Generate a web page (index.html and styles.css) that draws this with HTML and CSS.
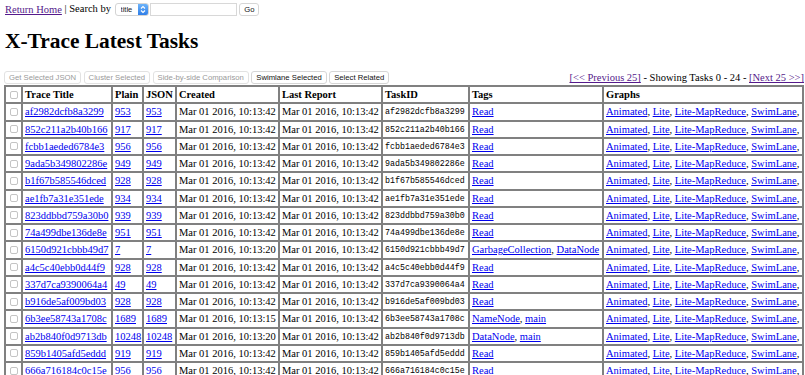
FILE: index.html
```html
<!DOCTYPE html>
<html lang="en">
<head>
    <meta charset="UTF-8">
    <title>X-Trace Latest Tasks</title>
    <link rel="stylesheet" href="styles.css">
</head>
<body>
    <div class="topbar">
        <a href="#" class="visited">Return Home</a> | Search by
        <span class="select">
            <select><option>title</option></select>
            <span class="stepper">
                <svg width="6" height="9" viewBox="0 0 6 9"><path d="M1 3.5 L3 1.5 L5 3.5 M1 5.5 L3 7.5 L5 5.5" fill="none" stroke="#fff" stroke-width="1.1"/></svg>
            </span>
        </span><input type="text" class="search"> <button class="small-btn">Go</button>
    </div>

    <h1>X-Trace Latest Tasks</h1>

    <div class="toolbar">
        <div class="actions">
            <button class="small-btn" disabled>Get Selected JSON</button>
            <button class="small-btn" disabled>Cluster Selected</button>
            <button class="small-btn" disabled>Side-by-side Comparison</button>
            <button class="small-btn">Swimlane Selected</button>
            <button class="small-btn">Select Related</button>
        </div>
        <div class="pager">
            <a href="#" class="visited">[&lt;&lt; Previous 25]</a> - Showing Tasks 0 - 24 - <a href="#" class="visited">[Next 25 &gt;&gt;]</a>
        </div>
    </div>

    <table class="tasks">
        <colgroup>
            <col class="c-check"><col class="c-title"><col class="c-plain"><col class="c-json">
            <col class="c-date"><col class="c-date"><col class="c-id"><col class="c-tags"><col class="c-graphs">
        </colgroup>
        <thead>
            <tr>
                <th class="chk"><input type="checkbox"></th>
                <th>Trace Title</th>
                <th>Plain</th>
                <th>JSON</th>
                <th>Created</th>
                <th>Last Report</th>
                <th>TaskID</th>
                <th>Tags</th>
                <th>Graphs</th>
            </tr>
        </thead>
        <tbody id="rows"></tbody>
    </table>

    <script>
        // id, size, created time, tags
        const tasks = [
            ['af2982dcfb8a3299', 953, '10:13:42', ['Read']],
            ['852c211a2b40b166', 917, '10:13:42', ['Read']],
            ['fcbb1aeded6784e3', 956, '10:13:42', ['Read']],
            ['9ada5b349802286e', 949, '10:13:42', ['Read']],
            ['b1f67b585546dced', 928, '10:13:42', ['Read']],
            ['ae1fb7a31e351ede', 934, '10:13:42', ['Read']],
            ['823ddbbd759a30b0', 939, '10:13:42', ['Read']],
            ['74a499dbe136de8e', 951, '10:13:42', ['Read']],
            ['6150d921cbbb49d7', 7, '10:13:20', ['GarbageCollection', 'DataNode']],
            ['a4c5c40ebb0d44f9', 928, '10:13:42', ['Read']],
            ['337d7ca9390064a4', 49, '10:13:42', ['Read']],
            ['b916de5af009bd03', 928, '10:13:42', ['Read']],
            ['6b3ee58743a1708c', 1689, '10:13:15', ['NameNode', 'main']],
            ['ab2b840f0d9713db', 10248, '10:13:20', ['DataNode', 'main']],
            ['859b1405afd5eddd', 919, '10:13:42', ['Read']],
            ['666a716184c0c15e', 956, '10:13:42', ['Read']]
        ];

        const link = (text) => `<a href="#">${text}</a>`;
        const graphs = ['Animated', 'Lite', 'Lite-MapReduce', 'SwimLane'].map(link).join(', ') + ',';

        document.getElementById('rows').innerHTML = tasks.map(([id, size, created, tags]) => `
            <tr>
                <td class="chk"><input type="checkbox"></td>
                <td>${link(id)}</td>
                <td>${link(size)}</td>
                <td>${link(size)}</td>
                <td>Mar 01 2016, ${created}</td>
                <td>Mar 01 2016, 10:13:42</td>
                <td class="mono">${id}</td>
                <td>${tags.map(link).join(', ')}</td>
                <td>${graphs}</td>
            </tr>`).join('');
    </script>
</body>
</html>
```

FILE: styles.css
```css
body {
    font-family: "Liberation Serif", "Times New Roman", serif;
    font-size: 10.5px;
    margin: 0;
    padding: 2px 0 0 5px;
    color: #000;
    background: #fff;
    overflow: hidden;
}

a {
    color: #0000ee;
}

a.visited {
    color: #551a8b;
}

.topbar {
    height: 13px;
    line-height: 13px;
    white-space: nowrap;
}

.topbar > * {
    vertical-align: middle;
}

.select {
    position: relative;
    display: inline-block;
    margin-left: 1px;
    margin-right: 1px;
    height: 13px;
}

.select select {
    appearance: none;
    -webkit-appearance: none;
    font-family: "Liberation Sans", Arial, sans-serif;
    font-size: 7.5px;
    width: 34px;
    height: 13px;
    padding: 0 0 0 5px;
    margin: 0;
    border: 1px solid #d4d4d4;
    border-radius: 3px;
    background: #fff;
    color: #222;
    display: block;
}

.stepper {
    position: absolute;
    right: 1px;
    top: 1px;
    width: 10px;
    height: 11px;
    border-radius: 0 2px 2px 0;
    background: linear-gradient(#6cb3fa, #2f7ee8);
    display: flex;
    align-items: center;
    justify-content: center;
    z-index: 1;
}

.search {
    width: 87px;
    height: 13px;
    box-sizing: border-box;
    border: 1px solid #d8d8d8;
    padding: 0 2px;
    margin: 0;
}

.small-btn {
    font-family: "Liberation Sans", Arial, sans-serif;
    font-size: 7.7px;
    height: 13px;
    padding: 0 4px;
    margin: 0;
    border: 1px solid #d6d6d6;
    border-radius: 3px;
    background: #fff;
    color: #111;
    line-height: 11px;
}

.small-btn:disabled {
    color: #9a9a9a;
    border-color: #e2e2e2;
}

h1 {
    font-size: 21.4px;
    line-height: 24px;
    margin: 14px 0 17px;
}

.toolbar {
    display: flex;
    justify-content: space-between;
    align-items: center;
    height: 15px;
}

.actions {
    display: flex;
    gap: 2.5px;
    margin-left: -1px;
    margin-top: -1px;
}

.pager {
    padding-right: 1px;
    white-space: nowrap;
}

.tasks {
    table-layout: fixed;
    width: 800px;
    border-collapse: separate;
    border-spacing: 0;
    border: 1px solid #808080;
    margin-left: -1px;
}

.c-check { width: 17px; }
.c-title { width: 90px; }
.c-plain { width: 31px; }
.c-json { width: 33px; }
.c-date { width: 103px; }
.c-id { width: 87px; }
.c-tags { width: 134px; }
.c-graphs { width: 200px; }

.tasks th,
.tasks td {
    border: 1px solid #808080;
    padding: 0 2px;
    line-height: 15.25px;
    text-align: left;
    white-space: nowrap;
    overflow: hidden;
}

.tasks th {
    font-weight: bold;
}

.tasks .chk {
    padding: 0;
    text-align: center;
}

.tasks input[type="checkbox"] {
    appearance: none;
    -webkit-appearance: none;
    width: 8px;
    height: 8px;
    margin: 0;
    vertical-align: middle;
    border: 1px solid #c4c4c4;
    border-radius: 2px;
    background: #fff;
    position: relative;
    top: -1px;
}

.tasks .mono {
    font-family: "Liberation Mono", "Courier New", monospace;
    font-size: 8.3px;
}
```
